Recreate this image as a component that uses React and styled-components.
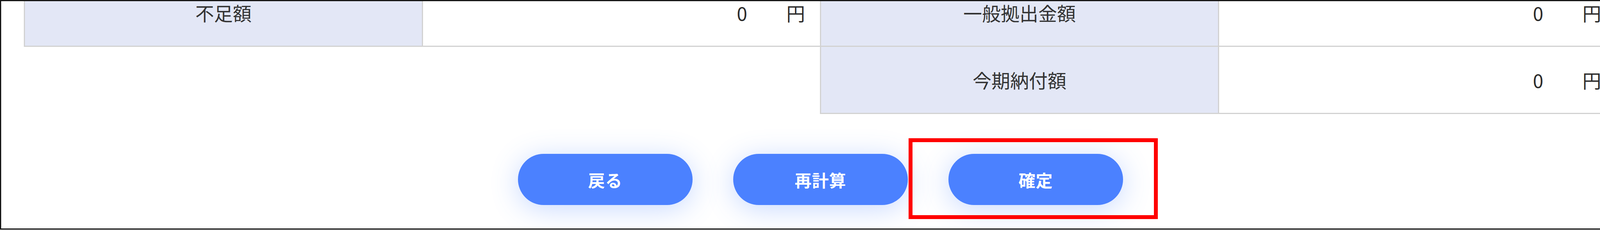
import React from "react";
import styled, { createGlobalStyle } from "styled-components";

// ─────────────────────────────────────────────────────────────────────────────
// Global
// ─────────────────────────────────────────────────────────────────────────────

const GlobalStyle = createGlobalStyle`
  html, body {
    margin: 0;
    padding: 0;
    background: #ffffff;
    overflow: hidden;
  }
  body {
    font-family: "Noto Sans CJK JP", "Noto Sans", sans-serif;
    color: #333333;
  }
`;

// ─────────────────────────────────────────────────────────────────────────────
// Styled Components
// ─────────────────────────────────────────────────────────────────────────────

const Frame = styled.div`
  box-sizing: border-box;
  width: 4201px;
  height: 588px;
  border: 3px solid #161616;
  background: #ffffff;
  overflow: hidden;
  padding: 0 58px;
`;

// the first row is cut off by the top of the capture
const Content = styled.div`
  margin-top: -58px;
`;

const Table = styled.table`
  width: 100%;
  table-layout: fixed;
  border-collapse: collapse;

  tr {
    height: 172px;
  }
`;

const Cell = styled.td`
  border: 3px solid #d2d2d2;
  font-size: 48px;
  line-height: 1.2;
  padding: 0;
  vertical-align: middle;
`;

const LabelCell = styled(Cell)`
  background: #e3e7f6;
  text-align: center;
  color: #333333;
`;

const ValueCell = styled(Cell)`
  background: #ffffff;
`;

const BlankCell = styled.td`
  border: none;
  padding: 0;
`;

const AmountRow = styled.div`
  display: flex;
  justify-content: flex-end;
  align-items: center;
  gap: 100px;
  padding-right: 38px;
  color: #2b2b2b;
`;

const ButtonRow = styled.div`
  display: flex;
  justify-content: center;
  gap: 104px;
  margin-top: 102px;
`;

const ButtonSlot = styled.div`
  position: relative;
`;

const PillButton = styled.button`
  width: 447px;
  height: 131px;
  border: none;
  border-radius: 66px;
  background: #4b81ff;
  color: #ffffff;
  font-family: "Noto Sans CJK JP", "Noto Sans", sans-serif;
  font-size: 43px;
  font-weight: 700;
  letter-spacing: 1px;
  cursor: pointer;
  box-shadow: 0 10px 70px rgba(74, 128, 255, 0.3);
`;

// red annotation box drawn over the screenshot
const Highlight = styled.div`
  position: absolute;
  left: -102px;
  top: -40px;
  width: 638px;
  height: 207px;
  box-sizing: border-box;
  border: 10px solid #ff0000;
  pointer-events: none;
`;

// ─────────────────────────────────────────────────────────────────────────────
// Component
// ─────────────────────────────────────────────────────────────────────────────

const Amount = ({ value }) => (
  <AmountRow>
    <span>{value}</span>
    <span>円</span>
  </AmountRow>
);

const App = () => {
  return (
    <>
      <GlobalStyle />
      <Frame>
        <Content>
          <Table>
            <tbody>
              <tr>
                <LabelCell>不足額</LabelCell>
                <ValueCell>
                  <Amount value="0" />
                </ValueCell>
                <LabelCell>一般拠出金額</LabelCell>
                <ValueCell>
                  <Amount value="0" />
                </ValueCell>
              </tr>
              <tr>
                <BlankCell colSpan={2} />
                <LabelCell>今期納付額</LabelCell>
                <ValueCell>
                  <Amount value="0" />
                </ValueCell>
              </tr>
            </tbody>
          </Table>

          <ButtonRow>
            <ButtonSlot>
              <PillButton>戻る</PillButton>
            </ButtonSlot>
            <ButtonSlot>
              <PillButton>再計算</PillButton>
            </ButtonSlot>
            <ButtonSlot>
              <PillButton>確定</PillButton>
              <Highlight />
            </ButtonSlot>
          </ButtonRow>
        </Content>
      </Frame>
    </>
  );
};

export default App;
